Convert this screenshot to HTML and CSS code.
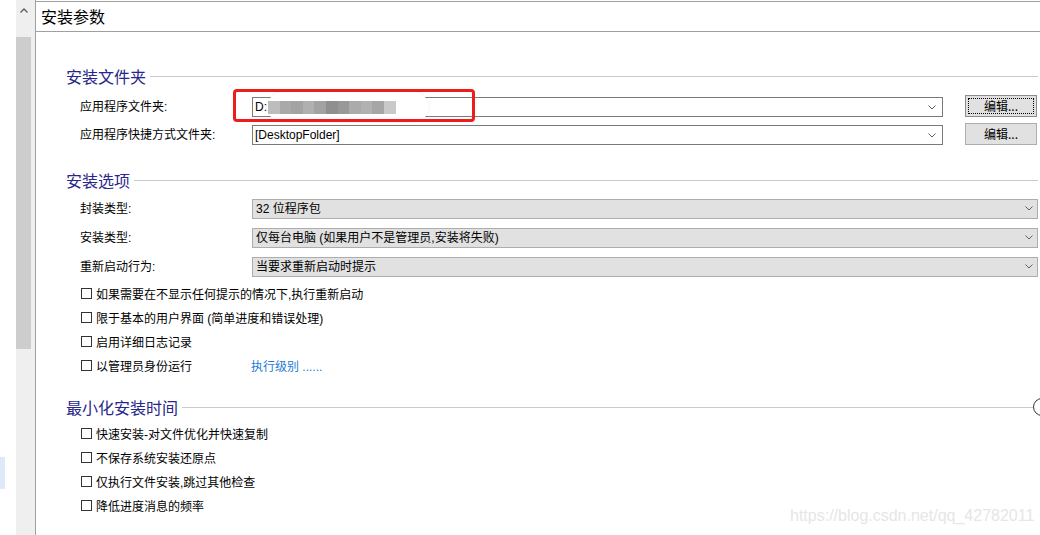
FILE: index.html
```html
<!DOCTYPE html>
<html lang="zh-CN">
<head>
<meta charset="utf-8">
<title>安装参数</title>
<link rel="stylesheet" href="styles.css">
</head>
<body>
<div class="app">
  <div class="edge"><div class="edge-sel"></div></div>
  <div class="vscroll">
    <div class="vs-up"><svg width="8" height="5" viewBox="0 0 8 5"><polyline points="0.5,4.5 4,1 7.5,4.5" fill="none" stroke="#606060" stroke-width="1.4"/></svg></div>
    <div class="vs-thumb"></div>
  </div>
  <div class="main">
    <div class="title">安装参数</div>
    <div class="content">
      <section class="group g1">
        <div class="ghead"><span class="gtext">安装文件夹</span><span class="gline"></span></div>
        <div class="frow r1">
          <div class="lbl">应用程序文件夹:</div>
          <div class="combo">
            <span class="ctext">D:</span>
            <span class="mosaic">
              <span class="smear"></span>
              <i style="background:#bdbdbd"></i><i style="background:#a9a9a9"></i><i style="background:#a3a3a3"></i><i style="background:#b0b0b0"></i><i style="background:#a2a2a2"></i><i style="background:#8f8f8f"></i><i style="background:#989898"></i><i style="background:#ababab"></i><i style="background:#b1b1b1"></i><i style="background:#a6a6a6"></i><i style="background:#c9c9c9"></i>
            </span>
            <svg class="chev" width="8" height="5" viewBox="0 0 8 5"><polyline points="0.5,0.5 4,4 7.5,0.5" fill="none" stroke="#606060" stroke-width="1"/></svg>
          </div>
          <button class="btn focus"><span class="btn-in">编辑...</span></button>
        </div>
        <div class="frow r2">
          <div class="lbl">应用程序快捷方式文件夹:</div>
          <div class="combo">
            <span class="ctext">[DesktopFolder]</span>
            <svg class="chev" width="8" height="5" viewBox="0 0 8 5"><polyline points="0.5,0.5 4,4 7.5,0.5" fill="none" stroke="#606060" stroke-width="1"/></svg>
          </div>
          <button class="btn"><span class="btn-in">编辑...</span></button>
        </div>
      </section>

      <section class="group g2">
        <div class="ghead"><span class="gtext">安装选项</span><span class="gline"></span></div>
        <div class="orow">
          <div class="lbl">封装类型:</div>
          <div class="select"><span class="ctext">32 位程序包</span><svg class="chev" width="8" height="5" viewBox="0 0 8 5"><polyline points="0.5,0.5 4,4 7.5,0.5" fill="none" stroke="#606060" stroke-width="1"/></svg></div>
        </div>
        <div class="orow">
          <div class="lbl">安装类型:</div>
          <div class="select"><span class="ctext">仅每台电脑 (如果用户不是管理员,安装将失败)</span><svg class="chev" width="8" height="5" viewBox="0 0 8 5"><polyline points="0.5,0.5 4,4 7.5,0.5" fill="none" stroke="#606060" stroke-width="1"/></svg></div>
        </div>
        <div class="orow">
          <div class="lbl">重新启动行为:</div>
          <div class="select"><span class="ctext">当要求重新启动时提示</span><svg class="chev" width="8" height="5" viewBox="0 0 8 5"><polyline points="0.5,0.5 4,4 7.5,0.5" fill="none" stroke="#606060" stroke-width="1"/></svg></div>
        </div>
        <div class="crow"><span class="cb"></span>如果需要在不显示任何提示的情况下,执行重新启动</div>
        <div class="crow"><span class="cb"></span>限于基本的用户界面 (简单进度和错误处理)</div>
        <div class="crow"><span class="cb"></span>启用详细日志记录</div>
        <div class="crow"><span class="cpart"><span class="cb"></span>以管理员身份运行</span><span class="link">执行级别 ......</span></div>
      </section>

      <section class="group g3">
        <div class="ghead"><span class="gtext">最小化安装时间</span><span class="gline"></span><span class="gcircle"></span></div>
        <div class="crow"><span class="cb"></span>快速安装-对文件优化并快速复制</div>
        <div class="crow"><span class="cb"></span>不保存系统安装还原点</div>
        <div class="crow"><span class="cb"></span>仅执行文件安装,跳过其他检查</div>
        <div class="crow"><span class="cb"></span>降低进度消息的频率</div>
      </section>
    </div>
  </div>
</div>
<div class="redbox"></div>
<div class="watermark">https://blog.csdn.net/qq_42782011</div>
</body>
</html>
```

FILE: styles.css
```css
html, body {
  margin: 0;
  padding: 0;
  background: #ffffff;
}
body {
  width: 1040px;
  height: 535px;
  overflow: hidden;
  position: relative;
  font-family: "Liberation Sans", "Noto Sans CJK SC", sans-serif;
  font-size: 12px;
  color: #000;
}
.app {
  display: flex;
  height: 535px;
}
.edge {
  width: 16px;
  flex: none;
  padding-top: 457px;
  box-sizing: border-box;
}
.edge-sel {
  width: 5px;
  height: 32px;
  background: #dde8f9;
}
.vscroll {
  width: 20px;
  flex: none;
  box-sizing: border-box;
  background: #efefef;
  border-right: 1px solid #a0a0a0;
}
.vs-up {
  width: 15px;
  height: 20px;
  display: flex;
  align-items: center;
  justify-content: center;
}
.vs-up svg { display: block; }
.vs-thumb {
  width: 15px;
  height: 312px;
  margin-top: 17px;
  background: #cdcdcd;
}
.main {
  flex: 1;
  min-width: 0;
  overflow: hidden;
}
.title {
  margin-top: 1px;
  height: 29px;
  line-height: 29px;
  border-top: 1px solid #a0a0a0;
  border-bottom: 1px solid #a0a0a0;
  padding-left: 5px;
  font-family: "Noto Sans CJK SC", sans-serif;
  font-size: 16px;
}
.content {
  padding: 0 2px 0 30px;
}
.ghead {
  display: flex;
  align-items: center;
  height: 20px;
}
.gtext {
  font-family: "Noto Sans CJK SC", sans-serif;
  font-size: 16px;
  line-height: 20px;
  color: #27278a;
  white-space: nowrap;
}
.gline {
  flex: 1;
  height: 1px;
  background: #cacaca;
  margin-left: 4px;
}
.gcircle {
  flex: none;
  width: 18px;
  height: 18px;
  box-sizing: border-box;
  border: 1px solid #333;
  border-radius: 50%;
  margin-right: -13px;
}
.g1 { margin-top: 34px; }
.g1 .ghead { margin-bottom: 7px; }
.g2 { margin-top: 21px; }
.g2 .ghead { margin-bottom: 4px; }
.g3 { margin-top: 20px; }
.g3 .ghead { margin-bottom: 4px; }

.lbl {
  flex: none;
  width: 186px;
  padding-left: 14px;
  box-sizing: border-box;
  white-space: nowrap;
  line-height: 16px;
}
.frow {
  display: flex;
  align-items: center;
  height: 28px;
}
.combo, .select {
  flex: 1;
  min-width: 0;
  height: 20px;
  box-sizing: border-box;
  display: flex;
  align-items: center;
  padding: 0 6px 0 2px;
  position: relative;
}
.combo {
  border: 1px solid #7a7a7a;
  background: #fff;
}
.select {
  border: 1px solid #adadad;
  background: #e1e1e1;
  padding-right: 4px;
  padding-left: 3px;
}
.ctext {
  flex: 1;
  white-space: nowrap;
  line-height: 16px;
  position: relative;
}
.combo .ctext { flex: none; }
.chev {
  flex: none;
  display: block;
  margin-left: auto;
}
.mosaic {
  position: relative;
  display: flex;
  height: 13px;
  margin-left: 1px;
}
.mosaic i {
  display: block;
  width: 11.6px;
  height: 13px;
  position: relative;
}
.smear {
  position: absolute;
  left: -1px;
  top: -9px;
  width: 162px;
  height: 30px;
  border-radius: 15px;
  background: #fff;
  box-shadow: 0 0 2px rgba(0, 0, 0, 0.12);
}
.btn {
  flex: none;
  width: 72px;
  height: 22px;
  margin: 0 1px 3px 22px;
  padding: 2px;
  box-sizing: border-box;
  border: 1px solid #adadad;
  background: #e1e1e1;
  font-family: "Noto Sans CJK SC", sans-serif;
  font-size: 12px;
  color: #000;
  display: flex;
}
.r2 .btn { margin-bottom: 2px; }
.btn-in {
  flex: 1;
  display: flex;
  align-items: center;
  justify-content: center;
  border: 1px dotted transparent;
  line-height: 14px;
}
.btn.focus {
  border-color: #8c8c8c;
}
.btn.focus .btn-in {
  border-color: #000;
}
.orow {
  display: flex;
  align-items: center;
  height: 29px;
}
.crow {
  display: flex;
  align-items: center;
  height: 24px;
  padding-left: 15px;
  white-space: nowrap;
}
.cpart {
  display: flex;
  align-items: center;
  width: 170px;
  flex: none;
}
.cb {
  flex: none;
  width: 11px;
  height: 11px;
  box-sizing: border-box;
  border: 1px solid #333;
  background: #fff;
  margin-right: 4px;
}
.link {
  color: #1a7bd4;
}
.redbox {
  position: absolute;
  left: 233px;
  top: 89px;
  width: 242px;
  height: 33px;
  box-sizing: border-box;
  border: 3px solid #ee1d1d;
  border-radius: 4px;
}
.watermark {
  position: absolute;
  left: 790px;
  top: 507px;
  font-family: "Liberation Sans", sans-serif;
  font-size: 16px;
  line-height: 18px;
  color: #e6e6e6;
  white-space: nowrap;
}
```
